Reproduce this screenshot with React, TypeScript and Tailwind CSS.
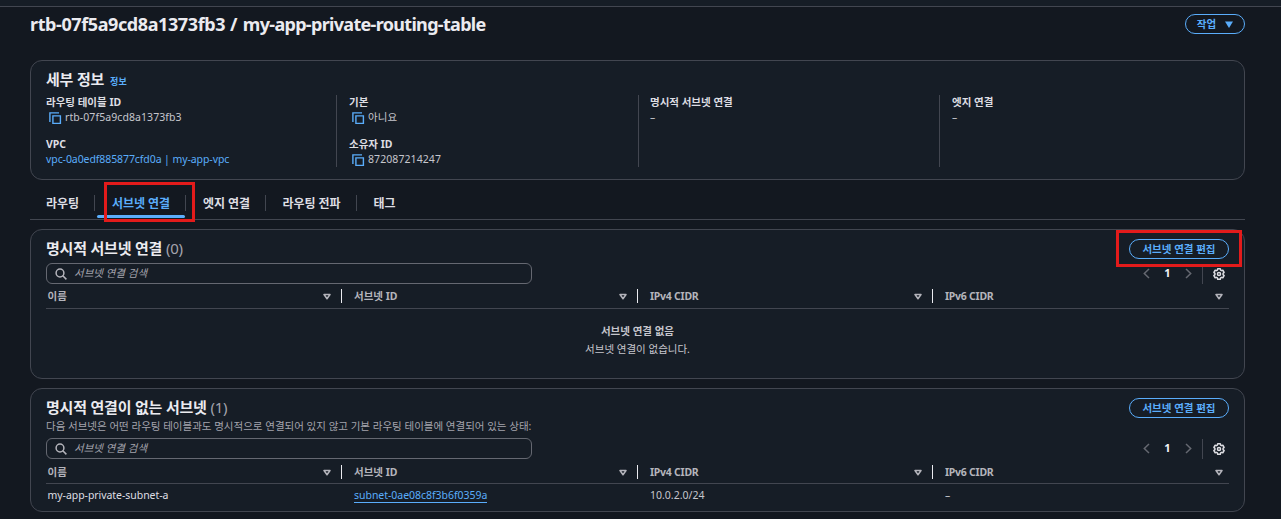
import React from "react";

const font = "font-['Noto_Sans','Noto_Sans_CJK_KR',sans-serif]";

function CopyIcon() {
  return (
    <svg width="13" height="13" viewBox="0 0 13 13" fill="none" stroke="#5aadfb" strokeWidth="1.4" className="shrink-0">
      <path d="M.9 10V.9h9.100" />
      <path d="M3.900 3.900h7.500v7.500H3.900z" />
    </svg>
  );
}

function SearchIcon() {
  return (
    <svg width="12" height="12" viewBox="0 0 12 12" fill="none" stroke="#b4b4bb" strokeWidth="1.5" className="shrink-0">
      <circle cx="5" cy="5" r="3.9" />
      <path d="M7.8 7.8l3.6 3.6" />
    </svg>
  );
}

function GearIcon() {
  return (
    <svg width="12" height="12" viewBox="0 0 16 16" fill="none" stroke="#dedee3" strokeWidth="2" strokeLinejoin="round" className="shrink-0">
      <path d="M6.300 1h3.400l.5 1.900 1 .6 1.900-.5 1.700 2.800L13.400 7.200v1.600l1.400 1.400-1.700 2.800-1.900-.5-1 .6L9.700 15H6.300l-.5-1.900-1-.6-1.900.5-1.700-2.800L2.600 8.800V7.200L1.200 5.800 2.900 3l1.900.5 1-.6z" />
      <circle cx="8" cy="8" r="2.100" />
    </svg>
  );
}

function Chevron({ right = false }: { right?: boolean }) {
  return (
    <svg width="7" height="11" viewBox="0 0 7 11" fill="none" stroke="#656871" strokeWidth="1.5" className="shrink-0">
      <path d={right ? "M1 1l4.700 4.500L1 10" : "M6 1L1.300 5.500 6 10"} />
    </svg>
  );
}

function SortIcon() {
  return (
    <svg width="8" height="7" viewBox="0 0 8 7" fill="none" stroke="#b4b4bb" strokeWidth="1.5" strokeLinejoin="round" className="shrink-0">
      <path d="M1 1.500h6L4 5.800z" />
    </svg>
  );
}

function Field({ label, children, copy = false, link = false }: { label: string; children: React.ReactNode; copy?: boolean; link?: boolean }) {
  return (
    <div className="h-[42px]">
      <div className="h-[15px] font-bold leading-[15px] text-[#dedee3]">{label}</div>
      <div className={link ? "flex h-[15px] items-center leading-[15px] tracking-[-0.08px] text-[#5aadfb]" : "flex h-[15px] items-center leading-[15px] tracking-[0.08px] text-[#c6c6cd]"}>
        {copy && <span className="ml-[3px] mr-[3px] flex pt-0.5"><CopyIcon /></span>}
        {children}
      </div>
    </div>
  );
}

function EditButton() {
  return (
    <button className="flex h-5 w-[100px] items-center justify-center rounded-full border border-[#5aadfb] text-[10.5px] font-bold leading-none text-[#5aadfb]">
      서브넷 연결 편집
    </button>
  );
}

function Toolbar() {
  return (
    <div className="flex h-[21px] items-center justify-between">
      <div className="flex h-[21px] w-[486px] items-center rounded-[6px] border border-[#656871] pl-2">
        <SearchIcon />
        <span className="ml-[7px] italic leading-[15px] text-[#a4a4ad]">서브넷 연결 검색</span>
      </div>
      <div className="flex h-[21px] items-center pr-1">
        <Chevron />
        <span className="w-[35px] text-center text-[11px] font-bold text-[#f3f3f7]">1</span>
        <Chevron right />
        <span className="ml-[10px] h-5 w-px bg-[#424650]" />
        <span className="ml-[10px] flex"><GearIcon /></span>
      </div>
    </div>
  );
}

function TableHeader({ low = false }: { low?: boolean }) {
  const cols = ["이름", "서브넷 ID", "IPv4 CIDR", "IPv6 CIDR"];
  const padding = ["pl-[1.5px] pr-[11px]", "pl-[12px] pr-[10px]", "pl-[13px] pr-[11px]", "pl-[12px] pr-[6px]"];
  return (
    <div className={`grid h-[25px] grid-cols-[296px_295px_296px_296px] border-b border-[#424650] font-bold text-[#b4b4bb] ${low ? "pt-px" : ""}`}>
      {cols.map((c, i) => (
        <div key={c} className={`flex h-[24px] items-center justify-between ${padding[i]}`}>
          <div className="flex items-center leading-[15px]">
            {i > 0 && <span className="-ml-[13px] mr-[12px] h-[14px] w-px bg-[#ebebf0]" />}
            <span className={i > 1 ? "tracking-[-0.25px]" : ""}>{c}</span>
          </div>
          <SortIcon />
        </div>
      ))}
    </div>
  );
}

function Card({ className, children }: { className: string; children: React.ReactNode }) {
  return <section className={`rounded-[12px] border border-[#424650] bg-[#161d26] px-[15px] ${className}`}>{children}</section>;
}

export default function App() {
  return (
    <div className={`relative h-[519px] w-[1281px] overflow-hidden bg-[#131820] text-[10.5px] ${font}`}>
      <div className="h-[7px] border-b border-[#424650] bg-[#161d26]" />
      <main className="ml-[30px] w-[1215px]">
        <header className="flex h-[53px] items-start justify-between">
          <h1 className="mt-[5px] whitespace-nowrap text-[18px] font-bold leading-6 text-[#ebebf0]">
            <span className="tracking-[-0.4px]">rtb-07f5a9cd8a1373fb3</span>
            <span className="tracking-[0.3px]"> / </span>
            <span className="tracking-[-0.68px]">my-app-private-routing-table</span>
          </h1>
          <button className="mt-[7px] flex h-5 w-[60px] items-center justify-center gap-[9px] rounded-full border border-[#5aadfb] font-bold leading-none text-[#5aadfb]">
            작업
            <svg width="8" height="7" viewBox="0 0 8 7" fill="#5aadfb"><path d="M0 .5h8L4 7z" /></svg>
          </button>
        </header>

        <Card className="h-[120px]">
          <div className="flex h-[34px] items-baseline pt-[8px]">
            <h2 className="text-[15px] font-bold leading-5 tracking-[-0.2px] text-[#ebebf0]">세부 정보</h2>
            <span className="ml-[6px] text-[9px] font-bold text-[#5aadfb]">정보</span>
          </div>
          <div className="grid h-[72px] grid-cols-[290px_302px_301px_290px] grid-rows-[72px]">
            <div>
              <Field label="라우팅 테이블 ID" copy>rtb-07f5a9cd8a1373fb3</Field>
              <Field label="VPC" link>vpc-0a0edf885877cfd0a | my-app-vpc</Field>
            </div>
            <div className="border-l border-[#424650] pl-3">
              <Field label="기본" copy>아니요</Field>
              <Field label="소유자 ID" copy>872087214247</Field>
            </div>
            <div className="border-l border-[#424650] pl-[11px]">
              <Field label="명시적 서브넷 연결">–</Field>
            </div>
            <div className="border-l border-[#424650] pl-3">
              <Field label="엣지 연결">–</Field>
            </div>
          </div>
        </Card>

        <nav className="relative flex h-[40px] items-center border-b border-[#424650] pt-[7px] text-[12px] font-bold leading-4 tracking-[-0.05px] text-[#dedee3]">
          <span className="w-[64px] pl-4 pt-px">라우팅</span>
          <span className="h-4 w-px bg-[#424650]" />
          <span className="w-[90px] pl-[17px] pt-px text-[#5aadfb]">서브넷 연결</span>
          <span className="h-4 w-px bg-[#424650]" />
          <span className="w-[79px] pl-[17px] pt-px">엣지 연결</span>
          <span className="h-4 w-px bg-[#424650]" />
          <span className="w-[90px] pl-[16.5px] pt-px">라우팅 전파</span>
          <span className="h-4 w-px bg-[#424650]" />
          <span className="pl-[16.5px] pt-px">태그</span>
          <span className="absolute left-[67px] top-[35px] h-[3px] w-[88px] rounded-full bg-[#5aadfb]" />
          <span className="absolute left-[74px] top-[2px] h-[40px] w-[91px] border-[3px] border-[#e31b1b]" />
        </nav>

        <Card className="relative mt-[9px] h-[150px]">
          <div className="flex h-[33px] items-start justify-between">
            <h2 className="mt-[8px] text-[15px] font-bold leading-5 tracking-[-0.2px] text-[#ebebf0]">
              명시적 서브넷 연결 <span className="font-normal text-[#a4a4ad]">(0)</span>
            </h2>
            <div className="mt-[9px]"><EditButton /></div>
          </div>
          <Toolbar />
          <TableHeader />
          <div className="pt-[13px] text-center text-[#c6c6cd]">
            <div className="h-[18px] font-bold leading-[18px]">서브넷 연결 없음</div>
            <div className="h-[18px] leading-[18px]">서브넷 연결이 없습니다.</div>
          </div>
          <span className="absolute left-[1085px] top-0 h-[37px] w-[126px] border-[3px] border-[#e31b1b]" />
        </Card>

        <Card className="mt-[9px] h-[124px]">
          <div className="flex h-[30px] items-start justify-between">
            <h2 className="mt-[8px] text-[15px] font-bold leading-5 tracking-[-0.2px] text-[#ebebf0]">
              명시적 연결이 없는 서브넷 <span className="font-normal text-[#a4a4ad]">(1)</span>
            </h2>
            <div className="mt-[9px]"><EditButton /></div>
          </div>
          <p className="h-[19px] whitespace-nowrap leading-[15px] text-[#a4a4ad]">
            다음 서브넷은 어떤 라우팅 테이블과도 명시적으로 연결되어 있지 않고 기본 라우팅 테이블에 연결되어 있는 상태:
          </p>
          <Toolbar />
          <TableHeader low />
          <div className="grid h-[22px] grid-cols-[296px_295px_296px_296px] items-center leading-[15px] text-[#c6c6cd]">
            <span className="pl-[1.5px] tracking-[-0.05px] text-[#dedee3]">my-app-private-subnet-a</span>
            <span className="pl-3"><a className="inline-block border-b border-[#5aadfb] leading-[13px] tracking-[-0.03px] text-[#5aadfb]">subnet-0ae08c8f3b6f0359a</a></span>
            <span className="pl-[13px]">10.0.2.0/24</span>
            <span className="pl-3">–</span>
          </div>
        </Card>
      </main>
    </div>
  );
}
